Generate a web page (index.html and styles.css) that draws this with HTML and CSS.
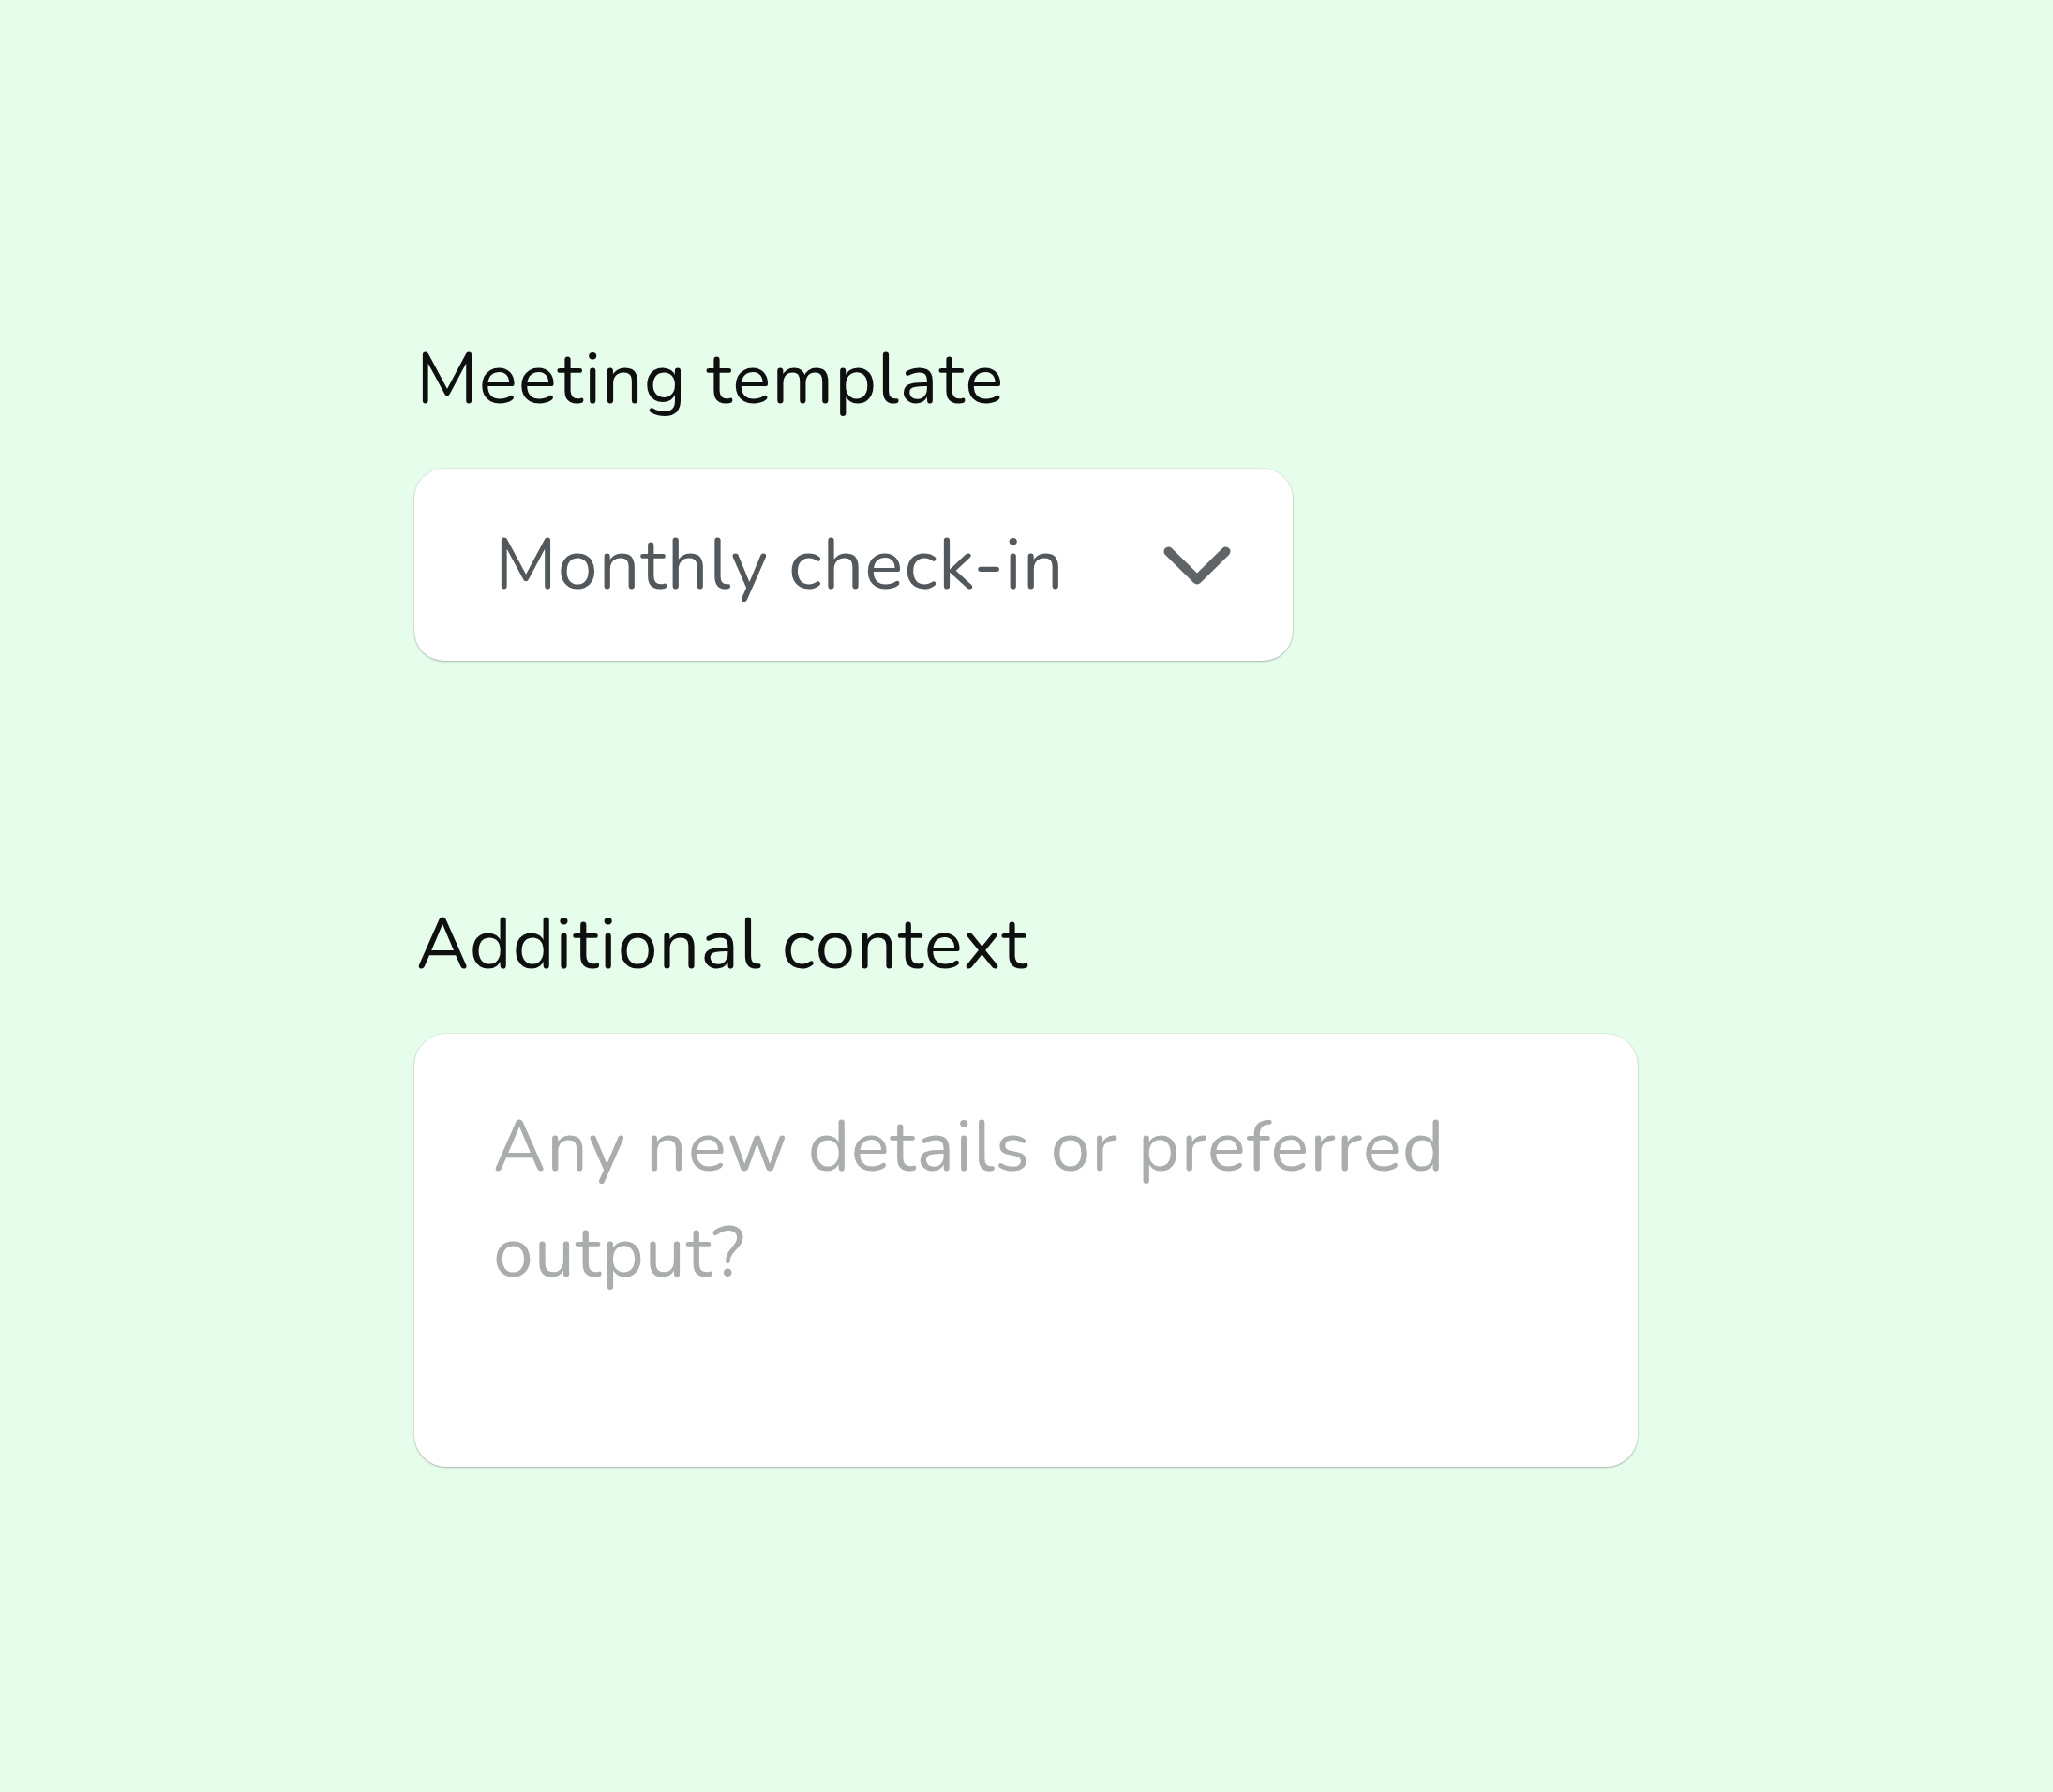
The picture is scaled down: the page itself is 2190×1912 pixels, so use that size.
FILE: index.html
```html
<!DOCTYPE html>
<html lang="en">
<head>
<meta charset="utf-8">
<title>Meeting form</title>
<link rel="stylesheet" href="styles.css">
</head>
<body>
<main class="form">
  <section class="field field-template">
    <label class="label" for="tpl">Meeting template</label>
    <div class="select" id="tpl">
      <span class="select-value">Monthly check-in</span>
      <svg class="chevron" width="72" height="42" viewBox="0 0 72 42" aria-hidden="true">
        <polyline points="5.5,5.5 36,35.5 66.5,5.5" fill="none" stroke="#5f6567" stroke-width="10" stroke-linecap="round" stroke-linejoin="round"/>
      </svg>
    </div>
  </section>
  <section class="field field-context">
    <label class="label" for="ctx">Additional context</label>
    <textarea class="textarea" id="ctx" placeholder="Any new details or preferred output?"></textarea>
  </section>
</main>
</body>
</html>
```
FILE: styles.css
```css
html, body {
  margin: 0;
  padding: 0;
  background: #e7fdec;
}
body {
  min-height: 1912px;
  font-family: "Nunito", "Lato", "Open Sans", sans-serif;
}
.form {
  display: flex;
  flex-direction: column;
  padding: 359px 0 0 442px;
  gap: 257px;
}
.field {
  display: flex;
  flex-direction: column;
  align-items: flex-start;
  gap: 49px;
}
.label {
  font-size: 77px;
  line-height: 92px;
  letter-spacing: 1px;
  color: #0e100f;
  padding-left: 2px;
}
.select {
  box-sizing: border-box;
  width: 937px;
  height: 205px;
  background: #fff;
  border-radius: 32px;
  box-shadow: 0 1px 2px rgba(0,0,0,0.24), 0 0 0 1px rgba(0,0,0,0.05);
  display: flex;
  align-items: center;
  justify-content: space-between;
  padding: 0 66px 0 86px;
}
.select-value {
  font-size: 77px;
  line-height: 1;
  letter-spacing: 1px;
  color: #52585b;
}
.chevron {
  display: block;
  flex: none;
  margin-top: 2px;
}
.textarea {
  box-sizing: border-box;
  width: 1305px;
  height: 462px;
  background: #fff;
  border: none;
  border-radius: 34px;
  box-shadow: 0 1px 2px rgba(0,0,0,0.24), 0 0 0 1px rgba(0,0,0,0.05);
  padding: 64px 120px 0 84px;
  font-family: "Nunito", "Lato", "Open Sans", sans-serif;
  font-size: 77px;
  line-height: 113px;
  letter-spacing: 1px;
  color: #333;
  resize: none;
  outline: none;
}
.textarea::placeholder {
  color: #aaadad;
  opacity: 1;
}
```
